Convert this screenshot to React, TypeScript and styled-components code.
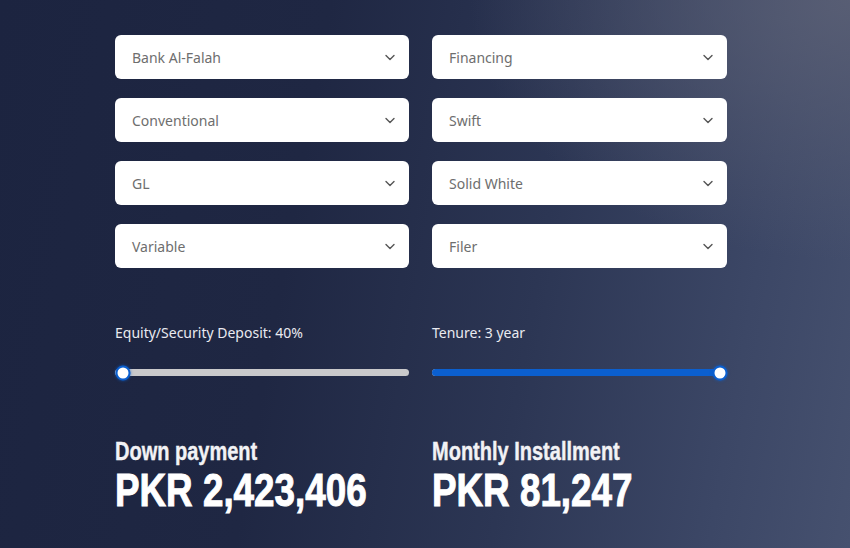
import React from 'react';
import styled, { createGlobalStyle } from 'styled-components';

const GlobalStyle = createGlobalStyle`
  html, body {
    margin: 0;
    padding: 0;
  }
  body {
    font-family: "Noto Sans", "Open Sans", sans-serif;
  }
`;

const Page = styled.div`
  width: 850px;
  height: 548px;
  overflow: hidden;
  box-sizing: border-box;
  padding: 35px 0 0 115px;
  background:
    radial-gradient(ellipse 380px 260px at 100% 0%, rgba(92, 97, 118, 0.85), rgba(92, 97, 118, 0) 100%),
    linear-gradient(100deg, #1c2440 0%, #1f2743 35%, #2c3654 62%, #3c4766 85%, #46516f 100%);
`;

const Grid = styled.div`
  display: grid;
  grid-template-columns: 294px 295px;
  column-gap: 23px;
  row-gap: 19px;
`;

const SelectBox = styled.div`
  height: 44px;
  box-sizing: border-box;
  background: #ffffff;
  border-radius: 6px;
  display: flex;
  align-items: center;
  justify-content: space-between;
  padding: 0 13px 0 17px;
  font-size: 14px;
  color: #6e6e6e;
  cursor: pointer;
`;

const Chevron = styled.svg`
  width: 12px;
  height: 12px;
  flex: none;
`;

const SliderRow = styled(Grid)`
  margin-top: 55px;
`;

const SliderLabel = styled.div`
  font-size: 14px;
  line-height: 20px;
  color: #e9eaf0;
`;

const Track = styled.div`
  position: relative;
  margin-top: 26px;
  height: 7px;
  border-radius: 4px;
  background: #c9c9cb;
`;

const Fill = styled.div`
  height: 100%;
  border-radius: 4px;
  background: #0b5fcf;
`;

const Thumb = styled.div`
  position: absolute;
  top: 50%;
  width: 15px;
  height: 15px;
  box-sizing: border-box;
  border-radius: 50%;
  background: #ffffff;
  border: 2.5px solid #0b5fcf;
  box-shadow: 0 0 3px rgba(11, 95, 207, 0.8);
  transform: translate(-50%, -50%);
`;

const ResultRow = styled(Grid)`
  margin-top: 60px;
`;

const Condensed = styled.div<{ $size: number; $lh: number; $stroke: number }>`
  font-family: "Liberation Sans", Arial, sans-serif;
  font-weight: 700;
  font-size: ${(p) => p.$size}px;
  line-height: ${(p) => p.$lh}px;
  white-space: nowrap;
  -webkit-text-stroke: ${(p) => p.$stroke}px currentColor;
  transform: scaleX(0.8);
  transform-origin: left center;
`;

const ResultLabel = styled(Condensed)`
  color: #f2f2f5;
`;

const ResultValue = styled(Condensed)`
  color: #ffffff;
  margin-top: 1px;
`;

const Select: React.FC<{ value: string }> = ({ value }) => (
  <SelectBox>
    <span>{value}</span>
    <Chevron viewBox="0 0 12 12">
      <path d="M2 4.5l4 4 4-4" fill="none" stroke="#555555" strokeWidth="1.4" strokeLinecap="round" strokeLinejoin="round" />
    </Chevron>
  </SelectBox>
);

const Slider: React.FC<{ label: string; percent: number }> = ({ label, percent }) => (
  <div>
    <SliderLabel>{label}</SliderLabel>
    <Track>
      <Fill style={{ width: `${percent}%` }} />
      <Thumb style={{ left: `calc(7.5px + (100% - 15px) * ${percent / 100})` }} />
    </Track>
  </div>
);

const selects = [
  'Bank Al-Falah',
  'Financing',
  'Conventional',
  'Swift',
  'GL',
  'Solid White',
  'Variable',
  'Filer',
];

export default function App() {
  return (
    <>
      <GlobalStyle />
      <Page>
        <Grid>
          {selects.map((s) => (
            <Select key={s} value={s} />
          ))}
        </Grid>
        <SliderRow>
          <Slider label="Equity/Security Deposit: 40%" percent={0} />
          <Slider label="Tenure: 3 year" percent={100} />
        </SliderRow>
        <ResultRow>
          <div>
            <ResultLabel $size={25} $lh={30} $stroke={0.4}>Down payment</ResultLabel>
            <ResultValue $size={46} $lh={46} $stroke={1}>PKR 2,423,406</ResultValue>
          </div>
          <div>
            <ResultLabel $size={25} $lh={30} $stroke={0.4}>Monthly Installment</ResultLabel>
            <ResultValue $size={46} $lh={46} $stroke={1}>PKR 81,247</ResultValue>
          </div>
        </ResultRow>
      </Page>
    </>
  );
}
